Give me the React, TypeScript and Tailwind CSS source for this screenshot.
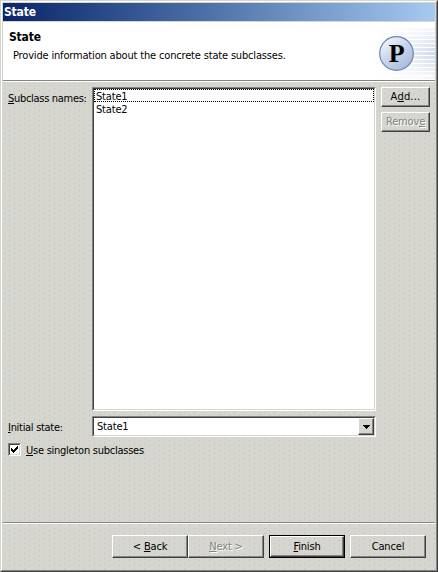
import React from 'react';

const dots =
  'bg-[#d6d6ce] bg-[radial-gradient(circle_at_1.5px_1.5px,#bac0d6_0.6px,transparent_0.7px),radial-gradient(circle_at_6.5px_3.5px,#bac0d6_0.6px,transparent_0.7px),radial-gradient(circle_at_1.5px_6.5px,#bac0d6_0.6px,transparent_0.7px),radial-gradient(circle_at_6.5px_8.5px,#bac0d6_0.6px,transparent_0.7px)] bg-[length:10px_10px]';
const raised =
  'border border-t-white border-l-white border-r-[#404040] border-b-[#404040] shadow-[inset_-1px_-1px_0_#848484]';
const sunken =
  'border border-t-[#848484] border-l-[#848484] border-r-white border-b-white';
const sunkenInner =
  'border border-t-[#404040] border-l-[#404040] border-r-[#d6d6ce] border-b-[#d6d6ce] bg-white';

function U({ children }: { children: React.ReactNode }) {
  return <span className="underline decoration-1 underline-offset-1 [text-decoration-skip-ink:none]">{children}</span>;
}

function Label({ children, className = '' }: { children: React.ReactNode; className?: string }) {
  return <span className={`inline-block whitespace-pre ${className}`}>{children}</span>;
}

function Emblem() {
  return (
    <svg width="68" height="58" viewBox="0 0 68 58" className="block">
      <defs>
        <linearGradient id="stripe" x1="0" x2="1">
          <stop offset="0" stopColor="#dfe6f2" stopOpacity="0" />
          <stop offset="0.6" stopColor="#dfe6f2" stopOpacity="0.8" />
          <stop offset="1" stopColor="#cdd9ec" />
        </linearGradient>
        <linearGradient id="disc" x1="0.1" y1="0" x2="0.9" y2="1">
          <stop offset="0" stopColor="#f8faff" />
          <stop offset="0.45" stopColor="#cbd7ec" />
          <stop offset="1" stopColor="#a3b5d9" />
        </linearGradient>
      </defs>
      {[6, 10, 14, 18, 22, 26, 30, 34, 38, 42, 46, 50, 54].map((y) => (
        <rect
          key={y}
          x="10"
          y={y}
          width="58"
          height="3"
          fill="url(#stripe)"
          opacity={1 - Math.abs(y - 30) / 32}
        />
      ))}
      <circle cx="29.5" cy="31.5" r="16.8" fill="url(#disc)" stroke="#6a86ae" strokeWidth="1.2" />
      <text x="29.7" y="40" textAnchor="middle" fontFamily="'Liberation Serif', serif" fontWeight="700" fontSize="26">P</text>
    </svg>
  );
}

export default function App() {
  return (
    <div className="h-[572px] w-[438px] border border-t-[#d6d6ce] border-l-[#d6d6ce] border-r-[#404040] border-b-[#404040] font-['DejaVu_Sans_Condensed','DejaVu_Sans',sans-serif] text-[11px] leading-[12px] tracking-[-0.17px] text-black">
      <div className="h-full border border-t-white border-l-white border-r-[#848484] border-b-[#848484]">
        <div className="flex h-full flex-col border border-[#d6d6ce]">
          <div className="flex h-[18px] bg-linear-to-r from-[#0a246a] to-[#a6caf0] pl-px pt-[3px] text-white">
            <Label className="text-[12px] font-bold">State</Label>
          </div>
          <div className="h-px bg-[#d6d6ce]" />
          <div className="flex h-[58px] justify-between bg-white">
            <div className="flex flex-col pl-[6px] pt-[9px]">
              <Label className="text-[12px] font-bold">State</Label>
              <Label className="mt-[7px] pl-[4px]">Provide information about the concrete state subclasses.</Label>
            </div>
            <Emblem />
          </div>
          <div className="h-px bg-[#848484]" />
          <div className="h-px bg-white" />
          <div className={`flex flex-1 flex-col ${dots}`}>
            <div className="mt-[5px] flex h-[324px] pl-[5px]">
              <div className="flex w-[84px] items-start pt-[6px]">
                <Label className="tracking-[-0.3px]"><U>S</U>ubclass names:</Label>
              </div>
              <div className={`w-[284px] ${sunken}`}>
                <div className={`h-full ${sunkenInner}`}>
                  <div className="flex h-[13px] border border-dotted border-black pl-px">
                    <Label className="leading-[13px]">State1</Label>
                  </div>
                  <div className="flex h-[13px] pl-[2px]">
                    <Label className="leading-[15px]">State2</Label>
                  </div>
                </div>
              </div>
              <div className="ml-[5px] flex flex-col gap-[5px]">
                <button className={`h-[20px] w-[49px] ${raised}`}><Label className="tracking-[0.2px]">A<U>d</U>d...</Label></button>
                <button className={`h-[20px] w-[49px] text-[#848484] [text-shadow:1px_1px_0_white] ${raised}`}><Label>Remov<U>e</U></Label></button>
              </div>
            </div>
            <div className="mt-[5px] flex h-[21px] pl-[5px]">
              <div className="flex w-[84px] items-start pt-[6px]"><Label className="tracking-[-0.3px]"><U>I</U>nitial state:</Label></div>
              <div className={`w-[284px] ${sunken}`}>
                <div className={`flex h-full justify-between ${sunkenInner}`}>
                  <Label className="pl-[3px] leading-[17px]">State1</Label>
                  <div className={`flex w-[16px] items-center justify-center bg-[#d6d6ce] ${raised}`}>
                    <svg width="7" height="4" shapeRendering="crispEdges"><path d="M0 0h7v1H0zM1 1h5v1H1zM2 2h3v1H2zM3 3h1v1H3z" /></svg>
                  </div>
                </div>
              </div>
            </div>
            <div className="mt-[6px] flex pl-[5px]">
              <div className={`h-[13px] w-[13px] ${sunken}`}>
                <div className={`h-full ${sunkenInner}`}>
                  <svg width="9" height="9" shapeRendering="crispEdges"><path d="M1 3h1v3H1zM2 4h1v3H2zM3 5h1v3H3zM4 4h1v3H4zM5 3h1v3H5zM6 2h1v3H6zM7 1h1v3H7z" /></svg>
                </div>
              </div>
              <Label className="ml-[5px] mt-[2px] tracking-[-0.25px]"><U>U</U>se singleton subclasses</Label>
            </div>
            <div className="mt-auto h-px bg-[#848484]" />
            <div className="h-px bg-white" />
            <div className="flex h-[45px] pl-[109px] pt-[11px]">
              <button className={`h-[23px] w-[76px] ${raised}`}><Label>&lt; <U>B</U>ack</Label></button>
              <button className={`h-[23px] w-[76px] text-[#848484] [text-shadow:1px_1px_0_white] ${raised}`}><Label><U>N</U>ext &gt;</Label></button>
              <div className="ml-[5px] h-[23px] w-[76px] border border-black">
                <button className={`h-full w-full ${raised}`}><Label><U>F</U>inish</Label></button>
              </div>
              <button className={`ml-[5px] h-[23px] w-[76px] ${raised}`}><Label>Cancel</Label></button>
            </div>
          </div>
        </div>
      </div>
    </div>
  );
}
